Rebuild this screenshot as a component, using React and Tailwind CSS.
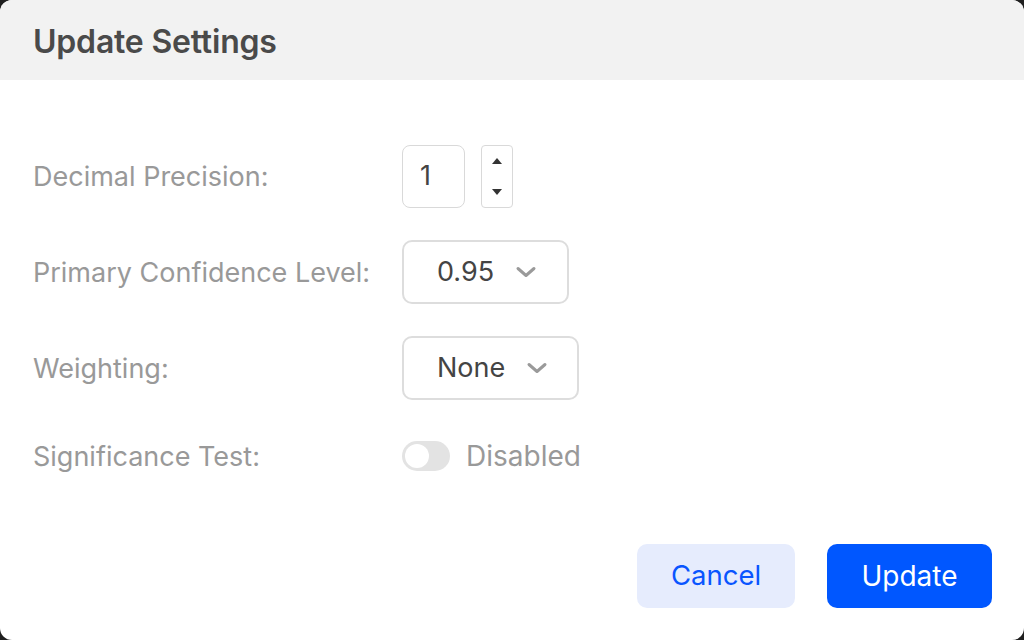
import React, { useState } from "react";

function Chevron() {
  return (
    <svg width="22" height="14" viewBox="0 0 22 14" fill="none">
      <path d="M3 3.5l8 7 8-7" stroke="#9a9a9a" strokeWidth="3" strokeLinecap="round" strokeLinejoin="round" />
    </svg>
  );
}

export default function App() {
  const [precision, setPrecision] = useState(1);
  const [enabled, setEnabled] = useState(false);

  return (
    <div className="w-[1024px] h-[640px] bg-[#1f1f1f]" style={{ fontFamily: "Inter, 'Noto Sans', sans-serif" }}>
      <div className="w-full h-full bg-white rounded-[12px] overflow-hidden flex flex-col">
        {/* Header */}
        <div className="h-[80px] shrink-0 bg-[#f2f2f2] flex items-center px-[33px] pt-[3px]">
          <h1 className="text-[32px] font-semibold text-[#4a4a4a] tracking-[-0.2px]">Update Settings</h1>
        </div>

        {/* Body */}
        <div className="flex-1 px-[33px] pt-[65px] flex flex-col gap-[32px]">
          <div className="flex items-center h-[63px]">
            <div className="w-[369px] text-[27px] text-[#999999] pt-[2px]">Decimal Precision:</div>
            <div className="flex items-center gap-[16px]">
              <div className="w-[63px] h-[63px] border border-[#d9d9d9] rounded-[8px] flex items-center px-[17px] text-[27px] text-[#444444]">
                {precision}
              </div>
              <div className="w-[32px] h-[63px] border border-[#d9d9d9] rounded-[4px] flex flex-col items-center justify-between py-[10px]">
                <button onClick={() => setPrecision(precision + 1)} className="h-[10px] flex items-center">
                  <svg width="10" height="6" viewBox="0 0 10 6"><path d="M5 0L10 6H0z" fill="#333" /></svg>
                </button>
                <button onClick={() => setPrecision(Math.max(0, precision - 1))} className="h-[10px] flex items-center">
                  <svg width="10" height="6" viewBox="0 0 10 6"><path d="M0 0h10L5 6z" fill="#333" /></svg>
                </button>
              </div>
            </div>
          </div>

          <div className="flex items-center h-[64px]">
            <div className="w-[369px] text-[27px] text-[#999999] pt-[2px]">Primary Confidence Level:</div>
            <div className="w-[167px] h-[64px] border-2 border-[#dddddd] rounded-[10px] flex items-center pl-[33px] gap-[21px] text-[27px] text-[#444444]">
              <span>0.95</span>
              <Chevron />
            </div>
          </div>

          <div className="flex items-center h-[64px]">
            <div className="w-[369px] text-[27px] text-[#999999] pt-[2px]">Weighting:</div>
            <div className="w-[177px] h-[64px] border-2 border-[#dddddd] rounded-[10px] flex items-center pl-[33px] gap-[21px] text-[27px] text-[#444444]">
              <span>None</span>
              <Chevron />
            </div>
          </div>

          <div className="flex items-center h-[48px]">
            <div className="w-[369px] text-[27px] text-[#999999] pt-[2px]">Significance Test:</div>
            <div className="flex items-center gap-[16px]">
              <button
                onClick={() => setEnabled(!enabled)}
                className={"w-[48px] h-[30px] rounded-full p-[3px] flex items-center " + (enabled ? "bg-[#0057ff] justify-end" : "bg-[#e3e3e3] justify-start")}
              >
                <span className="w-[24px] h-[24px] rounded-full bg-white block" />
              </button>
              <span className="text-[28px] text-[#999999]">{enabled ? "Enabled" : "Disabled"}</span>
            </div>
          </div>
        </div>

        {/* Footer */}
        <div className="flex justify-end gap-[32px] px-[32px] pb-[32px]">
          <button className="w-[158px] h-[64px] rounded-[10px] bg-[#e6ecfd] text-[#0a55ff] text-[27.5px]">Cancel</button>
          <button className="w-[165px] h-[64px] rounded-[10px] bg-[#0057ff] text-white text-[28px]">Update</button>
        </div>
      </div>
    </div>
  );
}
